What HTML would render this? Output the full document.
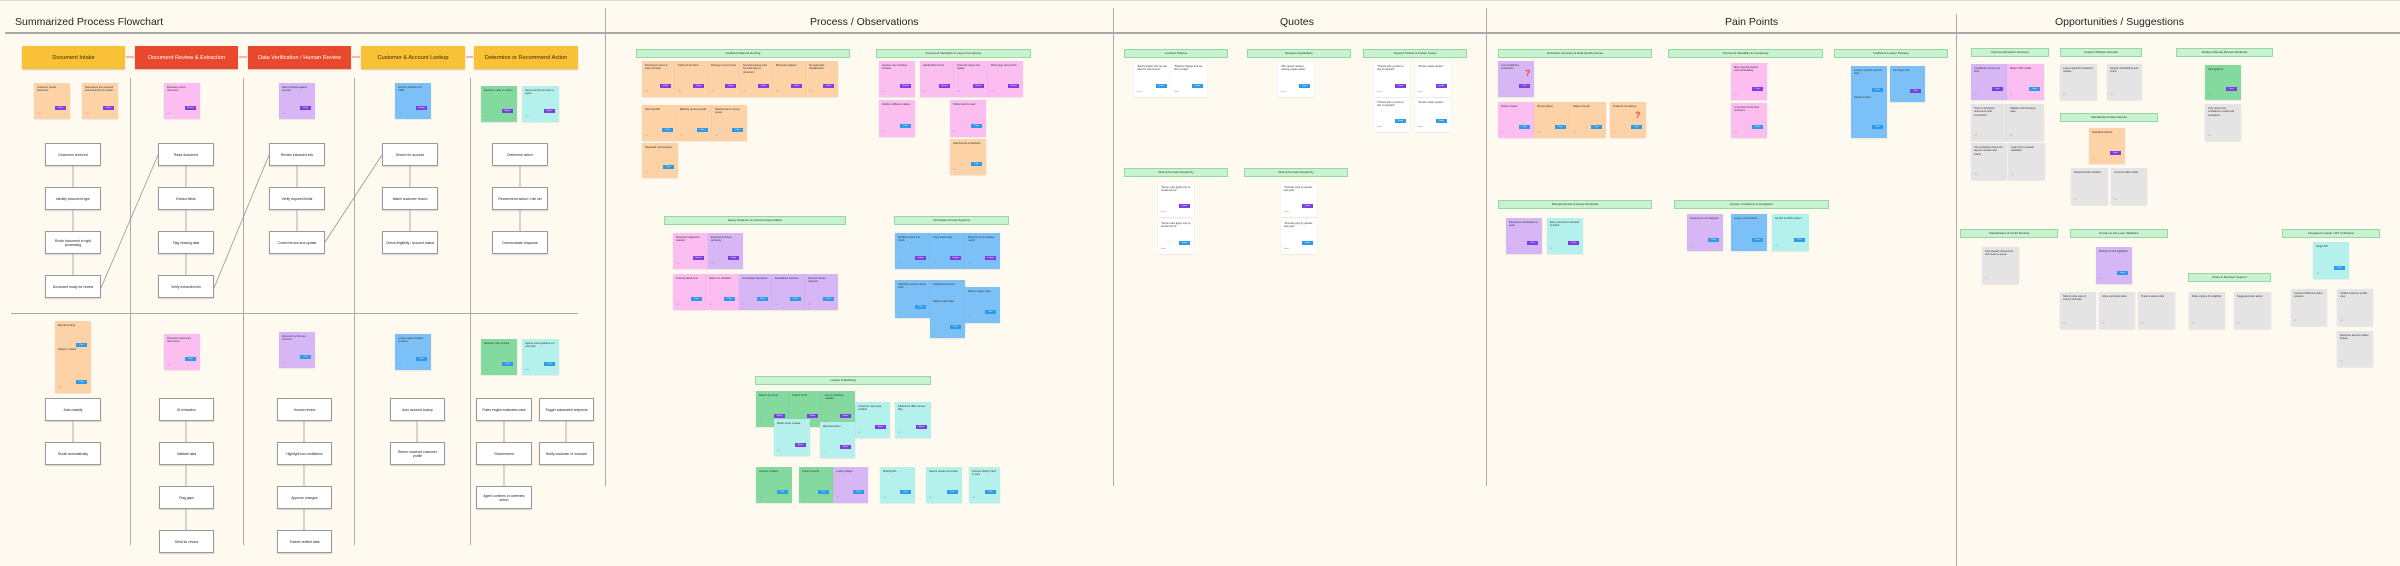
<!DOCTYPE html>
<html><head><meta charset="utf-8">
<style>
*{margin:0;padding:0;box-sizing:border-box}
body{width:2400px;height:566px;background:#fefaf0;position:relative;overflow:hidden;font-family:"Liberation Sans",sans-serif;color:#222}
.a{position:absolute}
.ttl{position:absolute;top:16px;font-size:10.5px;white-space:nowrap}
.ph{position:absolute;top:46px;height:23px;font-size:5.6px;display:flex;align-items:center;justify-content:center;box-shadow:0 1px 1px rgba(0,0,0,.2)}
.y{background:#f8c136;color:#3a2a00}.r{background:#e9482c;color:#fff}
.s{position:absolute;font-size:2.6px;line-height:3.4px;padding:3px 3px;color:#333;overflow:hidden;box-shadow:0 .5px 1px rgba(0,0,0,.12)}
.s i{position:absolute;right:4px;bottom:9px;width:11px;height:4.5px;background:#7b3fe4;font-style:normal;font-size:2px;color:#fff;text-align:center;line-height:4.5px}
.s i.bl{background:#2f9be8}
.s em{position:absolute;left:3px;bottom:3px;font-style:normal;font-size:2px;color:#999}
.o{background:#fdd2a6}.k{background:#fcbdf0}.u{background:#d7b6f6}.b{background:#7bc1f7}.g{background:#84da9e}.c{background:#b4f1ec}.w{background:#fff}.e{background:#e4e4e4}
.f{position:absolute;background:#fff;border:1px solid #9a9a9a;box-shadow:0 1px 1px rgba(0,0,0,.15);font-size:3.4px;display:flex;align-items:center;justify-content:center;text-align:center;padding:2px;height:23px}
.h{position:absolute;height:9px;background:#c8f2d0;border:1px solid #92d9a2;font-size:3px;text-align:center;line-height:7px;color:#333;white-space:nowrap;overflow:hidden}
.vl{position:absolute;width:1px;background:#a9a9a9}
.hl{position:absolute;height:1px;background:#a9a9a9}
</style></head><body>
<div class="hl" style="left:0;top:0;width:2400px;background:#ddd"></div>
<div class="hl" style="left:5px;top:32px;width:2395px;height:1.5px"></div>
<div class="vl" style="left:605px;top:8px;height:478px"></div>
<div class="vl" style="left:1113px;top:8px;height:478px"></div>
<div class="vl" style="left:1486px;top:8px;height:478px"></div>
<div class="vl" style="left:1956px;top:14px;height:552px"></div>
<div class="ttl" style="left:15px">Summarized Process Flowchart</div>
<div class="ttl" style="left:810px">Process / Observations</div>
<div class="ttl" style="left:1280px">Quotes</div>
<div class="ttl" style="left:1725px">Pain Points</div>
<div class="ttl" style="left:2055px">Opportunities / Suggestions</div>

<!-- flowchart -->
<div class="ph y" style="left:22px;width:103px">Document Intake</div>
<div class="ph r" style="left:135px;width:103px">Document Review &amp; Extraction</div>
<div class="ph r" style="left:248px;width:103px">Data Verification / Human Review</div>
<div class="ph y" style="left:361px;width:104px">Customer &amp; Account Lookup</div>
<div class="ph y" style="left:474px;width:104px">Determine or Recommend Action</div>
<div class="vl" style="left:130px;top:78px;height:467px"></div>
<div class="vl" style="left:243px;top:78px;height:467px"></div>
<div class="vl" style="left:354px;top:78px;height:467px"></div>
<div class="vl" style="left:470px;top:78px;height:467px"></div>
<div class="hl" style="left:11px;top:313px;width:567px"></div>

<div class="s o" style="left:34px;top:83px;width:36px;height:36px">Customer sends document<i>Intake</i><em>User</em></div>
<div class="s o" style="left:82px;top:83px;width:36px;height:36px">Documents are received and scanned into system<i>Intake</i><em>User</em></div>
<div class="s k" style="left:164px;top:83px;width:36px;height:36px">Reviewer opens document<i>Review</i><em>User</em></div>
<div class="s u" style="left:279px;top:83px;width:36px;height:36px">Data checked against records<i>Verify</i><em>User</em></div>
<div class="s b" style="left:395px;top:83px;width:36px;height:36px">Account looked up in CRM<i>Lookup</i><em>User</em></div>
<div class="s g" style="left:481px;top:86px;width:36px;height:36px">Decision made on action<i>Action</i><em>User</em></div>
<div class="s c" style="left:522px;top:86px;width:37px;height:36px">Recommend next step to agent<i>Action</i><em>User</em></div>

<div class="f" style="left:45px;top:143px;width:56px">Document received</div>
<div class="f" style="left:45px;top:187px;width:56px">Identify document type</div>
<div class="f" style="left:45px;top:231px;width:56px">Route document to right processing</div>
<div class="f" style="left:45px;top:275px;width:56px">Document ready for review</div>
<div class="f" style="left:158px;top:143px;width:56px">Read document</div>
<div class="f" style="left:158px;top:187px;width:56px">Extract fields</div>
<div class="f" style="left:158px;top:231px;width:56px">Flag missing data</div>
<div class="f" style="left:158px;top:275px;width:56px">Verify extracted info</div>
<div class="f" style="left:269px;top:143px;width:56px">Review extracted info</div>
<div class="f" style="left:269px;top:187px;width:56px">Verify required fields</div>
<div class="f" style="left:269px;top:231px;width:56px">Correct errors and update</div>
<div class="f" style="left:382px;top:143px;width:56px">Search for account</div>
<div class="f" style="left:382px;top:187px;width:56px">Match customer record</div>
<div class="f" style="left:382px;top:231px;width:56px">Check eligibility / account status</div>
<div class="f" style="left:492px;top:143px;width:56px">Determine action</div>
<div class="f" style="left:492px;top:187px;width:56px">Recommend action / rule set</div>
<div class="f" style="left:492px;top:231px;width:56px">Communicate response</div>

<div class="s o" style="left:55px;top:321px;width:36px;height:72px">Manual sorting<br><br><br><br><br><br><br>Delays in intake<i class="bl" style="bottom:46px">Pain</i><i class="bl">Pain</i><em>User</em></div>
<div class="s k" style="left:164px;top:334px;width:36px;height:36px">Reviewer reads long documents<i class="bl">Pain</i><em>User</em></div>
<div class="s u" style="left:279px;top:332px;width:36px;height:36px">Data entry errors are common<i class="bl">Pain</i><em>User</em></div>
<div class="s b" style="left:395px;top:334px;width:36px;height:36px">Lookup takes multiple systems<i class="bl">Pain</i><em>User</em></div>
<div class="s g" style="left:481px;top:339px;width:36px;height:36px">Decision rules unclear<i class="bl">Pain</i><em>User</em></div>
<div class="s c" style="left:522px;top:339px;width:37px;height:36px">Agents need guidance on next step<i class="bl">Pain</i><em>User</em></div>

<div class="f" style="left:45px;top:398px;width:56px">Auto classify</div>
<div class="f" style="left:45px;top:442px;width:56px">Route automatically</div>
<div class="f" style="left:159px;top:398px;width:55px">AI extraction</div>
<div class="f" style="left:159px;top:442px;width:55px">Validate data</div>
<div class="f" style="left:159px;top:486px;width:55px">Flag gaps</div>
<div class="f" style="left:159px;top:530px;width:55px">Send for review</div>
<div class="f" style="left:277px;top:398px;width:55px">Human review</div>
<div class="f" style="left:277px;top:442px;width:55px">Highlight low confidence</div>
<div class="f" style="left:277px;top:486px;width:55px">Approve changes</div>
<div class="f" style="left:277px;top:530px;width:55px">Submit verified data</div>
<div class="f" style="left:390px;top:398px;width:55px">Auto account lookup</div>
<div class="f" style="left:390px;top:442px;width:55px">Return matched customer profile</div>
<div class="f" style="left:476px;top:398px;width:56px">Rules engine evaluates case</div>
<div class="f" style="left:476px;top:442px;width:56px">Recommend</div>
<div class="f" style="left:476px;top:486px;width:56px">Agent confirms or overrides action</div>
<div class="f" style="left:539px;top:398px;width:55px">Trigger automated response</div>
<div class="f" style="left:539px;top:442px;width:55px">Notify customer of outcome</div>

<svg class="a" style="left:0;top:0" width="2400" height="566">
<g stroke="#8a8a8a" stroke-width=".7" fill="none">
<path d="M73 166V187M73 210V231M73 254V275M186 166V187M186 210V231M186 254V275M297 166V187M297 210V231M410 166V187M410 210V231M520 166V187M520 210V231"/>
<path d="M101 288L158 155M214 288L269 155M325 242L382 155"/>
<path d="M73 421V442M186 421V442M186 465V486M186 509V530M304 421V442M304 465V486M304 509V530M417 421V442M504 421V442M504 465V486M566 421V442"/>
</g>
<g stroke="#e9482c" stroke-width=".8" fill="none"><path d="M126 57H134M239 57H247M352 57H360M466 57H473"/></g>
</svg>

<!-- process / observations -->
<div class="h" style="left:636px;top:49px;width:214px">Inefficient Manual Routing</div>
<div class="h" style="left:876px;top:49px;width:155px">Document Variability &amp; Layout Complexity</div>
<div class="h" style="left:664px;top:216px;width:182px">Heavy Reliance on Human Interpretation</div>
<div class="h" style="left:894px;top:216px;width:115px">Verification Across Systems</div>
<div class="h" style="left:755px;top:376px;width:176px">Lookup &amp; Matching</div>

<div class="s o" style="left:642px;top:61px;width:33px;height:36px">Documents come in many formats<i>Intake</i><em>U1</em></div>
<div class="s o" style="left:675px;top:61px;width:33px;height:36px">Staff sort by hand<i>Intake</i><em>U2</em></div>
<div class="s o" style="left:708px;top:61px;width:32px;height:36px">Routing is error prone<i>Intake</i><em>U3</em></div>
<div class="s o" style="left:740px;top:61px;width:33px;height:36px">Several queues exist for each type of document<i>Intake</i><em>U4</em></div>
<div class="s o" style="left:773px;top:61px;width:33px;height:36px">Misroutes happen<i>Intake</i><em>U5</em></div>
<div class="s o" style="left:806px;top:61px;width:32px;height:36px">No automatic classification<i>Intake</i><em>U6</em></div>
<div class="s o" style="left:642px;top:105px;width:35px;height:36px">Slow handoff<i class="bl">Pain</i><em>U1</em></div>
<div class="s o" style="left:677px;top:105px;width:35px;height:36px">Backlog grows at peak<i class="bl">Pain</i><em>U2</em></div>
<div class="s o" style="left:712px;top:105px;width:35px;height:36px">Rework due to wrong queue<i class="bl">Pain</i><em>U3</em></div>
<div class="s o" style="left:642px;top:143px;width:36px;height:35px">Repeated manual steps<i class="bl">Pain</i><em>U4</em></div>

<div class="s k" style="left:879px;top:61px;width:36px;height:36px">Layouts vary between senders<i>Review</i><em>U1</em></div>
<div class="s k" style="left:920px;top:61px;width:34px;height:36px">Handwritten forms<i>Review</i><em>U2</em></div>
<div class="s k" style="left:954px;top:61px;width:34px;height:36px">Scanned copies low quality<i>Review</i><em>U3</em></div>
<div class="s k" style="left:988px;top:61px;width:35px;height:36px">Multi-page documents<i>Review</i><em>U4</em></div>
<div class="s k" style="left:879px;top:100px;width:36px;height:37px">Fields in different places<i class="bl">Pain</i><em>U5</em></div>
<div class="s k" style="left:950px;top:100px;width:36px;height:37px">Tables hard to read<i class="bl">Pain</i><em>U6</em></div>
<div class="s o" style="left:950px;top:139px;width:36px;height:36px">Attachments embedded<i class="bl">Pain</i><em>U7</em></div>

<div class="s k" style="left:673px;top:233px;width:35px;height:36px">Reviewer judgement needed<i>Review</i><em>U1</em></div>
<div class="s u" style="left:708px;top:233px;width:35px;height:36px">Experience drives accuracy<i>Verify</i><em>U2</em></div>
<div class="s k" style="left:673px;top:274px;width:33px;height:36px">Training takes time<i class="bl">Pain</i><em>U3</em></div>
<div class="s k" style="left:706px;top:274px;width:33px;height:36px">Notes not standard<i class="bl">Pain</i><em>U4</em></div>
<div class="s u" style="left:739px;top:274px;width:33px;height:36px">Inconsistent decisions<i class="bl">Pain</i><em>U5</em></div>
<div class="s u" style="left:772px;top:274px;width:33px;height:36px">Escalations frequent<i class="bl">Pain</i><em>U6</em></div>
<div class="s u" style="left:805px;top:274px;width:33px;height:36px">Second checks required<i class="bl">Pain</i><em>U7</em></div>

<div class="s b" style="left:895px;top:233px;width:35px;height:36px">Multiple systems to check<i>Lookup</i><em>U1</em></div>
<div class="s b" style="left:930px;top:233px;width:35px;height:36px">Copy paste data<i>Lookup</i><em>U2</em></div>
<div class="s b" style="left:965px;top:233px;width:35px;height:36px">Records do not always match<i>Lookup</i><em>U3</em></div>
<div class="s b" style="left:895px;top:280px;width:35px;height:38px">Switching screens slows work<i class="bl">Pain</i><em>U4</em></div>
<div class="s b" style="left:930px;top:280px;width:35px;height:58px">Duplicate accounts<br><br><br><br><br>Stale contact data<i class="bl">Pain</i><em>U5</em></div>
<div class="s b" style="left:965px;top:287px;width:35px;height:36px">Data in legacy tools<i class="bl">Pain</i><em>U6</em></div>

<div class="s g" style="left:756px;top:391px;width:33px;height:36px">Search by name<i>Match</i><em>U1</em></div>
<div class="s g" style="left:789px;top:391px;width:33px;height:36px">Search by ID<i>Match</i><em>U2</em></div>
<div class="s g" style="left:822px;top:391px;width:33px;height:36px">Fuzzy matching needed<i>Match</i><em>U3</em></div>
<div class="s c" style="left:855px;top:402px;width:35px;height:36px">Customer may have multiple<i>Match</i><em>U4</em></div>
<div class="s c" style="left:895px;top:402px;width:36px;height:36px">Addresses differ across files<i>Match</i><em>U5</em></div>
<div class="s c" style="left:774px;top:419px;width:36px;height:37px">Match score unclear<i>Match</i><em>U6</em></div>
<div class="s c" style="left:820px;top:422px;width:35px;height:36px">Manual confirm<i>Match</i><em>U7</em></div>
<div class="s g" style="left:756px;top:467px;width:36px;height:36px">Account verified<i class="bl">Pain</i><em>U1</em></div>
<div class="s g" style="left:799px;top:467px;width:34px;height:36px">Linked records<i class="bl">Pain</i><em>U2</em></div>
<div class="s u" style="left:833px;top:467px;width:35px;height:36px">Lookup delays<i class="bl">Pain</i><em>U3</em></div>
<div class="s c" style="left:880px;top:467px;width:35px;height:36px">Missing IDs<i class="bl">Pain</i><em>U4</em></div>
<div class="s c" style="left:926px;top:467px;width:36px;height:36px">Search results too broad<i class="bl">Pain</i><em>U5</em></div>
<div class="s c" style="left:969px;top:467px;width:31px;height:36px">Account history hard to view<i class="bl">Pain</i><em>U6</em></div>

<!-- quotes -->
<div class="h" style="left:1124px;top:49px;width:104px">Location Policies</div>
<div class="h" style="left:1247px;top:49px;width:104px">Request Capabilities</div>
<div class="h" style="left:1363px;top:49px;width:104px">Support Tickets &amp; Known Cases</div>
<div class="h" style="left:1124px;top:168px;width:104px">Rule &amp; Format Complexity</div>
<div class="h" style="left:1244px;top:168px;width:104px">Rule &amp; Format Complexity</div>
<div class="s w" style="left:1134px;top:62px;width:37px;height:35px">"Each location has its own rules for documents"<i class="bl">Quote</i><em>Agent</em></div>
<div class="s w" style="left:1171px;top:62px;width:36px;height:35px">"Policies change and we find out late"<i class="bl">Quote</i><em>Agent</em></div>
<div class="s w" style="left:1278px;top:62px;width:36px;height:35px">"We cannot request missing pages easily"<i class="bl">Quote</i><em>Agent</em></div>
<div class="s w" style="left:1374px;top:62px;width:36px;height:35px">"Tickets pile up when a doc is rejected"<i>Quote</i><em>Agent</em></div>
<div class="s w" style="left:1415px;top:62px;width:36px;height:35px">"Known cases repeat"<i>Quote</i><em>Agent</em></div>
<div class="s w" style="left:1374px;top:98px;width:36px;height:34px">"Tickets pile up when a doc is rejected"<i class="bl">Quote</i><em>Agent</em></div>
<div class="s w" style="left:1415px;top:98px;width:36px;height:34px">"Known cases repeat"<i class="bl">Quote</i><em>Agent</em></div>
<div class="s w" style="left:1158px;top:183px;width:36px;height:34px">"Some rules apply only to certain forms"<i>Quote</i><em>Agent</em></div>
<div class="s w" style="left:1158px;top:219px;width:36px;height:35px">"Some rules apply only to certain forms"<i class="bl">Quote</i><em>Agent</em></div>
<div class="s w" style="left:1281px;top:183px;width:36px;height:34px">"Formats vary by partner and year"<i>Quote</i><em>Agent</em></div>
<div class="s w" style="left:1281px;top:219px;width:36px;height:35px">"Formats vary by partner and year"<i class="bl">Quote</i><em>Agent</em></div>

<!-- pain points -->
<div class="h" style="left:1498px;top:49px;width:154px">Extraction Accuracy &amp; Data Quality Issues</div>
<div class="h" style="left:1668px;top:49px;width:155px">Document Variability &amp; Complexity</div>
<div class="h" style="left:1834px;top:49px;width:114px">Inefficient Lookup Process</div>
<div class="h" style="left:1498px;top:200px;width:154px">Manual Review &amp; Heavy Workload</div>
<div class="h" style="left:1674px;top:200px;width:155px">System Limitations &amp; Integration</div>
<div class="s u" style="left:1498px;top:61px;width:36px;height:36px">Low confidence extractions<i>Pain</i><em>U1</em></div>
<div class="a" style="left:1525px;top:68px;color:#e9482c;font-size:9px;font-weight:bold">?</div>
<div class="s k" style="left:1498px;top:102px;width:36px;height:36px">Fields missed<i class="bl">Pain</i><em>U2</em></div>
<div class="s o" style="left:1534px;top:102px;width:36px;height:36px">Wrong values<i class="bl">Pain</i><em>U3</em></div>
<div class="s o" style="left:1570px;top:102px;width:36px;height:36px">Dates misread<i class="bl">Pain</i><em>U4</em></div>
<div class="s o" style="left:1610px;top:102px;width:36px;height:36px">Totals do not add up<i class="bl">Pain</i><em>U5</em></div>
<div class="a" style="left:1635px;top:110px;color:#e9482c;font-size:9px;font-weight:bold">?</div>
<div class="s k" style="left:1731px;top:63px;width:36px;height:37px">Many layouts require manual handling<i>Pain</i><em>U1</em></div>
<div class="s k" style="left:1731px;top:103px;width:36px;height:35px">Long documents slow reviewers<i class="bl">Pain</i><em>U2</em></div>
<div class="s b" style="left:1851px;top:66px;width:36px;height:72px">Lookup requires several tools<br><br><br><br><br><br><br>Search is slow<i class="bl" style="bottom:46px">Pain</i><i class="bl">Pain</i><em>U1</em></div>
<div class="s b" style="left:1890px;top:66px;width:35px;height:36px">No single view<i>Pain</i><em>U2</em></div>
<div class="s u" style="left:1506px;top:218px;width:36px;height:36px">Reviewers overloaded at peak<i>Pain</i><em>U1</em></div>
<div class="s c" style="left:1547px;top:218px;width:36px;height:36px">Every document checked by hand<i>Pain</i><em>U2</em></div>
<div class="s u" style="left:1687px;top:214px;width:36px;height:37px">Systems do not integrate<i class="bl">Pain</i><em>U1</em></div>
<div class="s b" style="left:1731px;top:214px;width:36px;height:37px">Legacy tools limited<i class="bl">Pain</i><em>U2</em></div>
<div class="s c" style="left:1772px;top:214px;width:37px;height:37px">No API to CRM system<i class="bl">Pain</i><em>U3</em></div>

<!-- opportunities -->
<div class="h" style="left:1971px;top:48px;width:78px">Improve Extraction Accuracy</div>
<div class="h" style="left:2060px;top:48px;width:82px">Support Multiple Formats</div>
<div class="h" style="left:2176px;top:48px;width:97px">Reduce Manual Review Workload</div>
<div class="h" style="left:2060px;top:113px;width:98px">Standardized Data Capture</div>
<div class="h" style="left:1960px;top:229px;width:98px">Classification &amp; Smart Routing</div>
<div class="h" style="left:2070px;top:229px;width:98px">Human-in-the-Loop Validation</div>
<div class="h" style="left:2282px;top:229px;width:98px">Integrated Lookup / API Unification</div>
<div class="h" style="left:2188px;top:273px;width:83px">Rules &amp; Decision Support</div>
<div class="s u" style="left:1971px;top:64px;width:36px;height:36px">Confidence scores per field<i>Idea</i><em>U1</em></div>
<div class="s k" style="left:2007px;top:64px;width:37px;height:36px">Better OCR model<i class="bl">Idea</i><em>U2</em></div>
<div class="s e" style="left:1971px;top:104px;width:36px;height:37px">Train on historical documents with corrections<em>U3</em></div>
<div class="s e" style="left:2007px;top:104px;width:37px;height:37px">Validate with business rules<em>U4</em></div>
<div class="s e" style="left:1971px;top:143px;width:36px;height:37px">Use templates where the layout is known and stable<em>U5</em></div>
<div class="s e" style="left:2008px;top:143px;width:37px;height:37px">Learn from reviewer feedback<em>U6</em></div>
<div class="s e" style="left:2060px;top:64px;width:37px;height:36px">Layout agnostic extraction models<em>U1</em></div>
<div class="s e" style="left:2107px;top:64px;width:35px;height:36px">Support handwriting and scans<em>U2</em></div>
<div class="s o" style="left:2089px;top:128px;width:36px;height:36px">Standard schema<i>Idea</i><em>U1</em></div>
<div class="s e" style="left:2071px;top:168px;width:37px;height:37px">Required field checklist<em>U2</em></div>
<div class="s e" style="left:2111px;top:168px;width:36px;height:37px">Common data model<em>U3</em></div>
<div class="s g" style="left:2205px;top:65px;width:36px;height:35px">Auto approve<i>Idea</i><em>U1</em></div>
<div class="s e" style="left:2205px;top:104px;width:36px;height:37px">Only review low confidence results and exceptions<em>U2</em></div>
<div class="s e" style="left:1982px;top:247px;width:37px;height:37px">Auto classify documents and route to queue<em>U1</em></div>
<div class="s u" style="left:2096px;top:247px;width:36px;height:37px">Review UI with highlights<i class="bl">Idea</i><em>U1</em></div>
<div class="s e" style="left:2060px;top:292px;width:36px;height:37px">Side by side view of source and data<em>U2</em></div>
<div class="s e" style="left:2099px;top:292px;width:36px;height:37px">Inline correction tools<em>U3</em></div>
<div class="s e" style="left:2138px;top:292px;width:37px;height:37px">Track reviewer edits<em>U4</em></div>
<div class="s e" style="left:2189px;top:292px;width:36px;height:37px">Rules engine for eligibility<em>U1</em></div>
<div class="s e" style="left:2234px;top:292px;width:37px;height:37px">Suggested next action<em>U2</em></div>
<div class="s c" style="left:2313px;top:242px;width:36px;height:37px">Single API<i class="bl">Idea</i><em>U1</em></div>
<div class="s e" style="left:2291px;top:289px;width:36px;height:37px">Connect CRM and policy systems<em>U2</em></div>
<div class="s e" style="left:2337px;top:289px;width:36px;height:37px">Unified customer profile view<em>U3</em></div>
<div class="s e" style="left:2337px;top:331px;width:36px;height:36px">Real-time account status lookup<em>U4</em></div>
</body></html>
